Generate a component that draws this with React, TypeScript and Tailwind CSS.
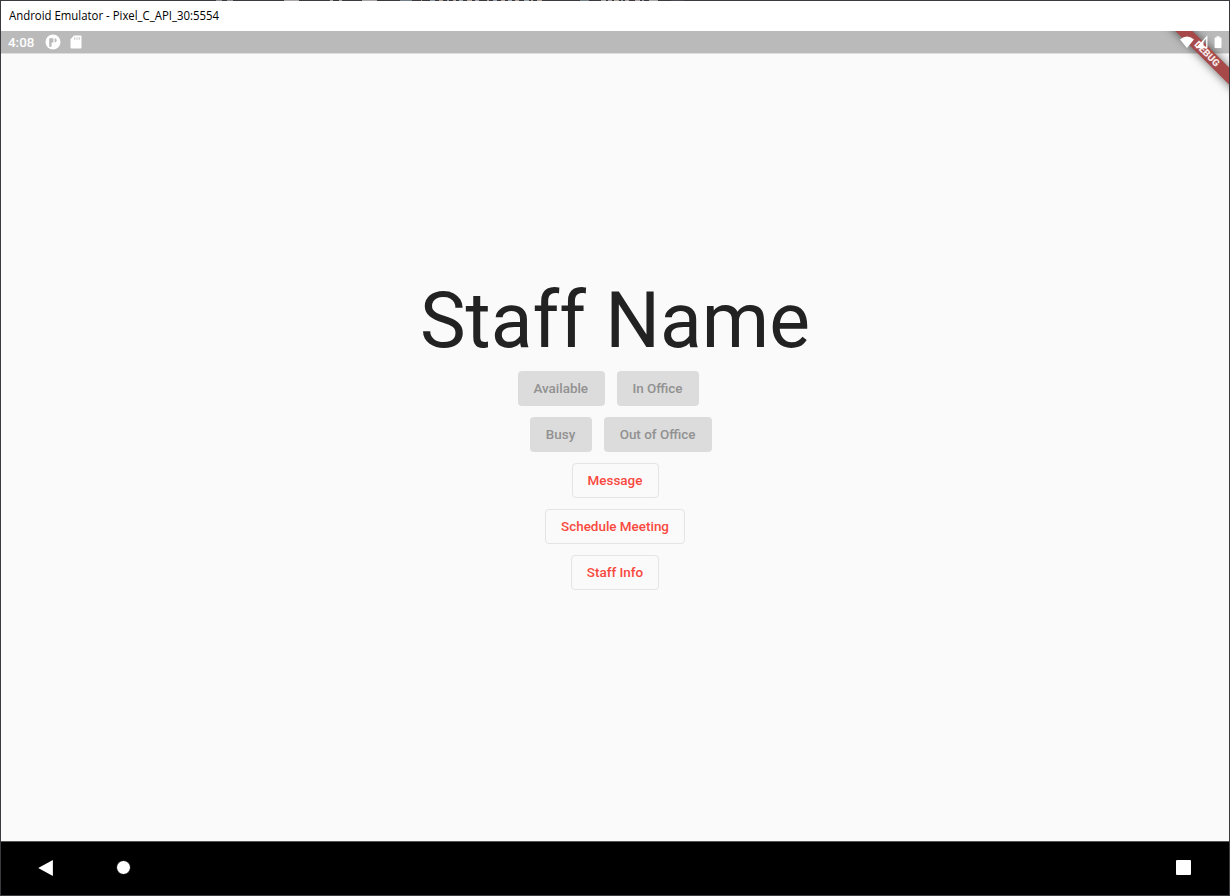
import type { ReactNode } from "react";

const TOP_EDGE: [number, number, string][] = [
  [216, 6, "#8d8d91"], [227, 6, "#8d8d91"], [284, 15, "#aaa6a8"], [330, 3, "#aaa6a8"], [339, 3, "#aaa6a8"],
  [362, 15, "#aaa6a8"], [400, 12, "#75818a"], [421, 1, "#b8a080"], [430, 5, "#8a97a4"],
  [439, 4, "#b0a090"], [447, 2, "#909cab"], [453, 3, "#b5a49b"], [459, 4, "#9ba6b0"],
  [467, 5, "#b4a49b"], [475, 4, "#a5a5b0"], [487, 2, "#b5a49b"], [493, 4, "#96a3ae"],
  [501, 4, "#b4a49b"], [508, 4, "#9ba6b0"], [515, 4, "#b4a49b"], [524, 5, "#9ba6b0"],
  [531, 2, "#b4a49b"], [537, 5, "#b5a49b"], [580, 9, "#75818a"], [601, 5, "#aaa6a8"],
  [608, 4, "#a4a0a8"], [614, 5, "#b0a49b"], [621, 2, "#8b98a4"], [625, 4, "#b0a6a8"],
  [635, 5, "#b0a6a8"], [642, 2, "#8b98a4"], [649, 9, "#aaa6a8"], [671, 13, "#48484e"],
];

function Button({ children, outlined = false, width }: { children: ReactNode; outlined?: boolean; width: string }) {
  return (
    <button
      className={`flex h-[35px] shrink-0 items-center justify-center rounded-[4px] whitespace-nowrap text-[13.45px] leading-none font-medium ${width} ${
        outlined ? "border border-[#e4e4e4] bg-transparent text-[#f9493e]" : "bg-[#dcdcdc] pr-px text-[#919191]"
      }`}
    >
      {children}
    </button>
  );
}

export default function App() {
  return (
    <div className="flex h-[896px] w-[1230px] flex-col overflow-hidden bg-[#39393e] font-['Roboto',sans-serif]">
      <svg className="block h-px w-full shrink-0" viewBox="0 0 1230 1" preserveAspectRatio="none" aria-hidden="true">
        {TOP_EDGE.map(([x, w, fill]) => (
          <rect key={x} x={x} width={w} height="1" fill={fill} />
        ))}
      </svg>
      <div className="relative mx-px flex h-[894px] shrink-0 flex-col overflow-hidden bg-[#fafafa]">
        <header className="flex h-[30px] shrink-0 items-center bg-white pl-2 font-['Open_Sans',sans-serif] text-black">
          <span className="origin-left scale-x-[0.949] text-[12px] leading-none whitespace-nowrap">
            Android Emulator - Pixel_C_API_30:5554
          </span>
        </header>

        <div className="flex h-[23px] shrink-0 items-center border-b border-[#dedede] bg-[#bababa] pl-[7px] text-white">
          <span className="w-[37px] pt-[2px] text-[13.4px] leading-none font-medium">4:08</span>
          <svg className="h-4 w-4" viewBox="0 0 16 16" aria-hidden="true">
            <circle cx="8" cy="8" r="7.5" fill="#fff" />
            <path d="M4.2 4.2h4.2v4.3H6.6v4.2H4.2z" fill="#bababa" />
            <path d="M9.6 4.2a2.1 2.1 0 0 1 0 4.2z" fill="#bababa" />
          </svg>
          <svg className="ml-[9px] h-[14px] w-3" viewBox="0 0 12 14" aria-hidden="true">
            <path d="M4 .5h6.5q1 0 1 1v11q0 1-1 1h-9q-1 0-1-1V4.2z" fill="#fff" />
            <path d="M4.1 2.3h1.2v2.5H4.1zM6.4 2.3h1.2v2.5H6.4zM8.7 2.3h1.2v2.5H8.7z" fill="#cecece" />
          </svg>
        </div>

        <main className="flex min-h-0 flex-1 flex-col items-center pt-[222px]">
          <h1 className="flex h-[90px] items-center text-[76.9px] leading-none font-normal whitespace-nowrap text-[#222222]">
            Staff Name
          </h1>
          <div className="mt-[5px] flex flex-col items-center gap-[11px]">
            <div className="flex gap-[12.5px] pr-[13px]">
              <Button width="w-[86.5px]">Available</Button>
              <Button width="w-[82px]">In Office</Button>
            </div>
            <div className="flex gap-[12px] pl-[12px]">
              <Button width="w-[62px]">Busy</Button>
              <Button width="w-[108px]">Out of Office</Button>
            </div>
            <Button outlined width="w-[87px]">Message</Button>
            <Button outlined width="w-[140px]">Schedule Meeting</Button>
            <Button outlined width="w-[88px]">Staff Info</Button>
          </div>
        </main>

        <nav className="flex h-[54px] shrink-0 items-center border-t border-[#555] bg-black pr-[38px] pb-[2px] pl-[36px]">
          <button aria-label="Back">
            <svg className="block h-[18px] w-4" viewBox="0 0 16 18" aria-hidden="true">
              <path d="M15.9 1v16L1.2 9z" fill="#fff" />
            </svg>
          </button>
          <button aria-label="Home" className="ml-[63px] h-[15px] w-[15px] rounded-full border-[0.5px] border-black bg-white" />
          <button aria-label="Overview" className="ml-auto h-[15px] w-[15px] rounded-[1px] bg-white" />
        </nav>

        <div className="absolute top-[30px] right-0 h-[72px] w-[76px] overflow-hidden">
          <div className="absolute top-[16.6px] left-[3.6px] flex h-[11.6px] w-[100px] rotate-45 items-center justify-center bg-[#a74949] text-[9.8px] leading-none font-black text-[#f8eaea] shadow-[0_0_9px_1px_rgba(0,0,0,0.5)]">
            DEBUG
          </div>
        </div>
        <svg className="absolute top-[34px] right-[4px] h-[16px] w-[48px]" viewBox="0 0 48 16" aria-hidden="true">
          <path d="M3 4.5Q10-1.5 17 4.5L10 13z" fill="#fff" />
          <path d="M29.8 2v10.5H20z" fill="none" stroke="#fff" strokeWidth="1.3" />
          <path d="M26.5 5.5v7.5h-7z" fill="#fff" />
          <path d="M39.5 1.2h3V2.4h1.3q.7 0 .7.7v9.2q0 .7-.7.7h-5.5q-.7 0-.7-.7V3.1q0-.7.7-.7h1.2z" fill="#fff" />
        </svg>
      </div>
    </div>
  );
}
